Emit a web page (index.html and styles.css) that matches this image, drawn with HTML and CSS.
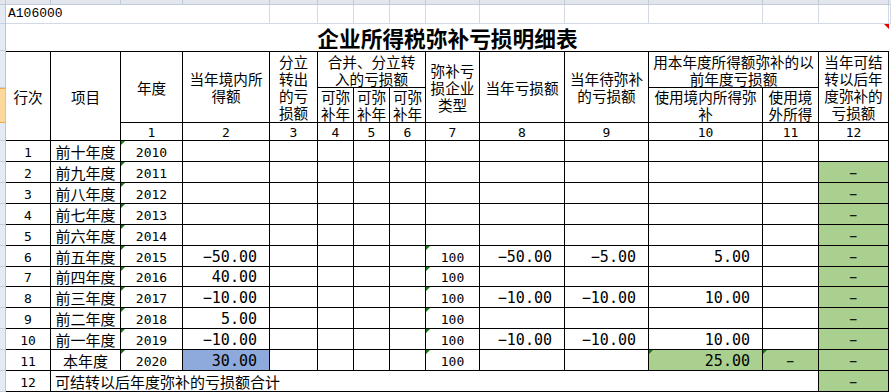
FILE: index.html
```html
<!DOCTYPE html>
<html lang="zh-CN">
<head>
<meta charset="utf-8">
<title>A106000 企业所得税弥补亏损明细表</title>
<link rel="stylesheet" href="styles.css">
</head>
<body>
<div class="app">
  <div class="colhdr">
    <span></span><span></span><span></span><span></span><span></span><span></span><span></span><span></span><span></span><span></span><span></span><span></span><span></span><span></span><span></span>
  </div>
  <div class="main">
    <div class="rowhdr">
      <div class="rh h1"></div>
      <div class="rh h2"></div>
      <div class="rh h3"></div>
      <div class="rh h4 sel"></div>
      <div class="rh h5"></div>
      <div class="rh hd"></div><div class="rh hd"></div><div class="rh hd"></div><div class="rh hd"></div><div class="rh hd"></div><div class="rh hd"></div>
      <div class="rh hs"></div><div class="rh hd"></div><div class="rh hd"></div><div class="rh hd"></div><div class="rh hd"></div><div class="rh hd"></div>
    </div>
    <div class="sheet">
      <div class="r1">
        <div class="gl a1">A106000</div>
        <div class="gl"></div><div class="gl"></div><div class="gl"></div><div class="gl"></div><div class="gl"></div><div class="gl"></div><div class="gl"></div><div class="gl"></div><div class="gl"></div><div class="gl"></div><div class="gl"></div><div class="gl"></div>
      </div>
      <div class="title">企业所得税弥补亏损明细表<span class="note"></span></div>
      <div class="grid">
        <div class="c h rs3">行次</div>
        <div class="c h rs3">项目</div>
        <div class="c h rs2">年度</div>
        <div class="c h rs2">当年境内所<br>得额</div>
        <div class="c h rs2">分立<br>转出<br>的亏<br>损额</div>
        <div class="c h cs3">合并、分立转<br>入的亏损额</div>
        <div class="c h rs2">弥补亏<br>损企业<br>类型</div>
        <div class="c h rs2">当年亏损额</div>
        <div class="c h rs2">当年待弥补<br>的亏损额</div>
        <div class="c h cs2">用本年度所得额弥补的以<br>前年度亏损额</div>
        <div class="c h rs2">当年可结<br>转以后年<br>度弥补的<br>亏损额</div>
        <div class="c h">可弥<br>补年</div>
        <div class="c h">可弥<br>补年</div>
        <div class="c h">可弥<br>补年</div>
        <div class="c h">使用境内所得弥<br>补</div>
        <div class="c h">使用境<br>外所得</div>

        <div class="c n">1</div><div class="c n">2</div><div class="c n">3</div><div class="c n">4</div><div class="c n">5</div><div class="c n">6</div><div class="c n">7</div><div class="c n">8</div><div class="c n">9</div><div class="c n">10</div><div class="c n">11</div><div class="c n">12</div>

        <div class="c n">1</div><div class="c">前十年度</div><div class="c n t">2010</div><div class="c"></div><div class="c"></div><div class="c"></div><div class="c"></div><div class="c"></div><div class="c"></div><div class="c"></div><div class="c"></div><div class="c"></div><div class="c"></div><div class="c"></div>

        <div class="c n">2</div><div class="c">前九年度</div><div class="c n t">2011</div><div class="c"></div><div class="c"></div><div class="c"></div><div class="c"></div><div class="c"></div><div class="c"></div><div class="c"></div><div class="c"></div><div class="c"></div><div class="c"></div><div class="c n g">−</div>

        <div class="c n">3</div><div class="c">前八年度</div><div class="c n t">2012</div><div class="c"></div><div class="c"></div><div class="c"></div><div class="c"></div><div class="c"></div><div class="c"></div><div class="c"></div><div class="c"></div><div class="c"></div><div class="c"></div><div class="c n g">−</div>

        <div class="c n">4</div><div class="c">前七年度</div><div class="c n t">2013</div><div class="c"></div><div class="c"></div><div class="c"></div><div class="c"></div><div class="c"></div><div class="c"></div><div class="c"></div><div class="c"></div><div class="c"></div><div class="c"></div><div class="c n g">−</div>

        <div class="c n">5</div><div class="c">前六年度</div><div class="c n t">2014</div><div class="c"></div><div class="c"></div><div class="c"></div><div class="c"></div><div class="c"></div><div class="c"></div><div class="c"></div><div class="c"></div><div class="c"></div><div class="c"></div><div class="c n g">−</div>

        <div class="c n">6</div><div class="c">前五年度</div><div class="c n t">2015</div><div class="c r">−50.00</div><div class="c"></div><div class="c"></div><div class="c"></div><div class="c"></div><div class="c n t">100</div><div class="c r">−50.00</div><div class="c r">−5.00</div><div class="c r">5.00</div><div class="c"></div><div class="c n g">−</div>

        <div class="c n">7</div><div class="c">前四年度</div><div class="c n t">2016</div><div class="c r">40.00</div><div class="c"></div><div class="c"></div><div class="c"></div><div class="c"></div><div class="c n t">100</div><div class="c"></div><div class="c"></div><div class="c"></div><div class="c"></div><div class="c n g">−</div>

        <div class="c n">8</div><div class="c">前三年度</div><div class="c n t">2017</div><div class="c r">−10.00</div><div class="c"></div><div class="c"></div><div class="c"></div><div class="c"></div><div class="c n t">100</div><div class="c r">−10.00</div><div class="c r">−10.00</div><div class="c r">10.00</div><div class="c"></div><div class="c n g">−</div>

        <div class="c n">9</div><div class="c">前二年度</div><div class="c n t">2018</div><div class="c r">5.00</div><div class="c"></div><div class="c"></div><div class="c"></div><div class="c"></div><div class="c n t">100</div><div class="c"></div><div class="c"></div><div class="c"></div><div class="c"></div><div class="c n g">−</div>

        <div class="c n">10</div><div class="c">前一年度</div><div class="c n t">2019</div><div class="c r">−10.00</div><div class="c"></div><div class="c"></div><div class="c"></div><div class="c"></div><div class="c n t">100</div><div class="c r">−10.00</div><div class="c r">−10.00</div><div class="c r">10.00</div><div class="c"></div><div class="c n g">−</div>

        <div class="c n">11</div><div class="c">本年度</div><div class="c n t">2020</div><div class="c r b">30.00</div><div class="c"></div><div class="c"></div><div class="c"></div><div class="c"></div><div class="c n t">100</div><div class="c"></div><div class="c"></div><div class="c r g t">25.00</div><div class="c n g t">−</div><div class="c n g">−</div>

        <div class="c n">12</div><div class="c cs12 l">可结转以后年度弥补的亏损额合计</div><div class="c n g">−</div>
      </div>
    </div>
  </div>
</div>
</body>
</html>
```

FILE: styles.css
```css
* { box-sizing: border-box; }

html, body {
  margin: 0;
  padding: 0;
  background: #fff;
  overflow: hidden;
}

body {
  font-family: "Noto Sans CJK SC", "Noto Sans", sans-serif;
  color: #000;
  width: 891px;
  height: 392px;
}

.app {
  --cols: 45px 70px 62px 87px 48px 36px 36px 36px 54px 85px 84px 114px 56px 70px;
  width: 891px;
  height: 392px;
  overflow: hidden;
}

/* spreadsheet column header strip */
.colhdr {
  height: 5px;
  display: grid;
  grid-template-columns: 6px var(--cols) 1fr;
  background: #e3e7ed;
  border-bottom: 1px solid #c3cbd6;
}
.colhdr span {
  border-right: 1px solid #c3cbd6;
}

.main {
  display: flex;
}

/* spreadsheet row header strip */
.rowhdr {
  width: 6px;
  flex: none;
  display: flex;
  flex-direction: column;
  background: #e4ebf5;
  border-right: 1px solid #b8c6d8;
}
.rh { border-bottom: 1px solid #c5d1e0; }
.h1 { height: 19px; }
.h2 { height: 27px; }
.h3 { height: 37px; }
.h4 { height: 35px; }
.h5 { height: 18px; }
.hd { height: 21px; }
.hs { height: 20px; }
.sel {
  background: #fcd99b;
  border-top: 1px solid #f1a84f;
  border-bottom: 1px solid #f1a84f;
}

.sheet {
  flex: none;
  width: 885px;
}

/* first spreadsheet row */
.r1 {
  height: 19px;
  display: grid;
  grid-template-columns: 177px 87px 48px 36px 36px 36px 54px 85px 84px 114px 56px 70px 1fr;
  border-bottom: 1px solid #d4dae3;
}
.gl { border-right: 1px solid #d4dae3; }
.a1 {
  font-family: "Liberation Mono", "DejaVu Sans Mono", monospace;
  font-size: 13px;
  line-height: 18px;
  padding-left: 2px;
  border-right-color: transparent;
}

.title {
  position: relative;
  height: 27px;
  width: 883px;
  text-align: center;
  font-size: 21.7px;
  font-weight: bold;
  line-height: 27px;
}
.note {
  position: absolute;
  right: 0;
  top: 0;
  width: 0;
  height: 0;
  border-top: 5px solid #e00000;
  border-left: 5px solid transparent;
}

/* the form grid */
.grid {
  display: grid;
  grid-template-columns: var(--cols);
  grid-template-rows: 36px 35px 18px repeat(6, 21px) 20px repeat(5, 21px);
  border-top: 1px solid #000;
  width: 883px;
}

.c {
  position: relative;
  display: flex;
  align-items: center;
  justify-content: center;
  text-align: center;
  border-right: 1px solid #000;
  border-bottom: 1px solid #000;
  font-size: 15px;
  line-height: 17px;
  white-space: nowrap;
}

.h {
  font-size: 14.6px;
  line-height: 17px;
}

.rs2 { grid-row: span 2; }
.rs3 { grid-row: span 3; }
.cs2 { grid-column: span 2; }
.cs3 { grid-column: span 3; }
.cs12 { grid-column: span 12; }

.n {
  font-family: "DejaVu Sans Mono", monospace;
  font-size: 13px;
  padding-top: 2px;
}

.r {
  justify-content: flex-end;
  padding-right: 12px;
  padding-top: 2px;
  font-family: "DejaVu Sans Mono", monospace;
  font-size: 15px;
}

.l {
  justify-content: flex-start;
  padding-left: 4px;
}

.g { background: #a9d08e; }
.b { background: #8ea9db; }

/* Excel error indicator */
.t::before {
  content: "";
  position: absolute;
  left: 0;
  top: 0;
  width: 0;
  height: 0;
  border-top: 4px solid #107c10;
  border-right: 4px solid transparent;
}
```
